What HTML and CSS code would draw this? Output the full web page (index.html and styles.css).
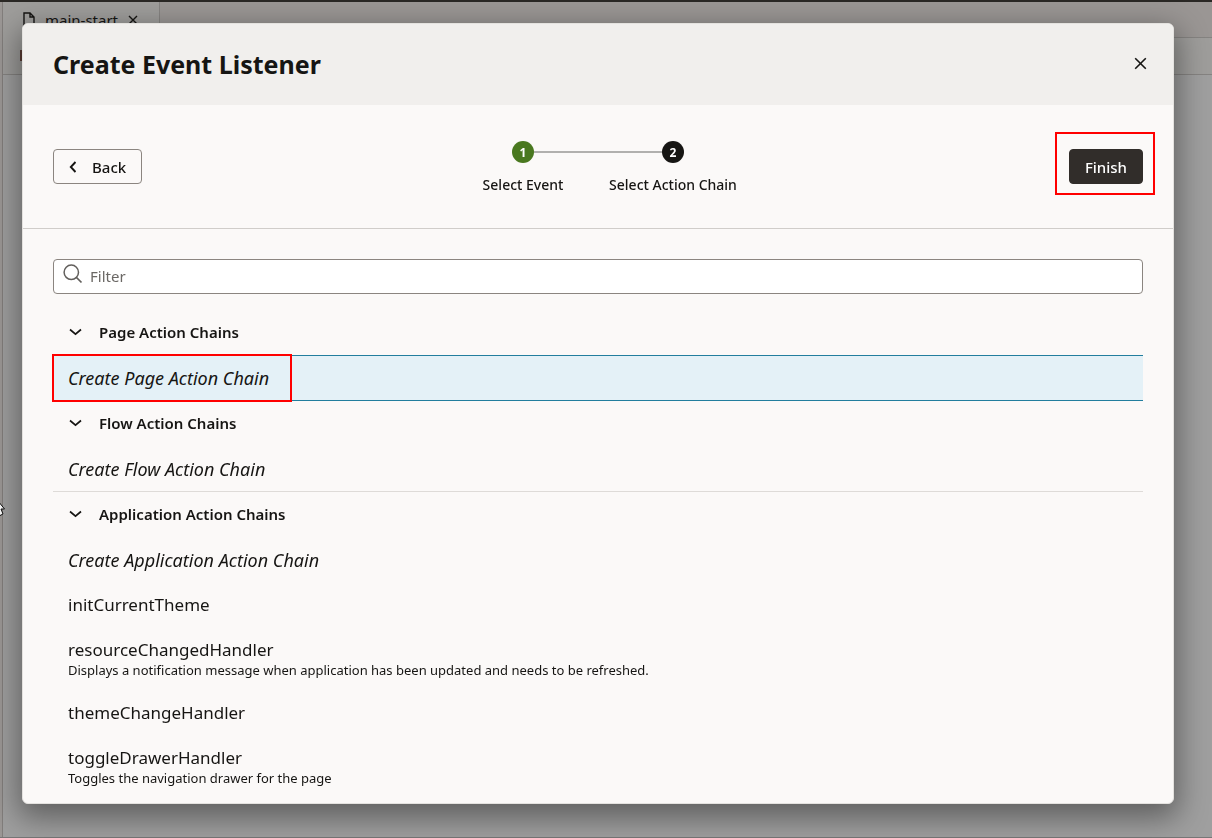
FILE: index.html
```html
<!DOCTYPE html>
<html lang="en">
<head>
<meta charset="utf-8">
<title>Create Event Listener</title>
<link rel="stylesheet" href="styles.css">
</head>
<body>
<div class="workspace" aria-hidden="true">
  <div class="tabbar">
    <div class="tab">
      <svg class="file-icon" width="12" height="16" viewBox="0 0 12 16"><path d="M1 1h6l4 4v10H1zM7 1v4h4" fill="none" stroke="currentColor" stroke-width="1.4"/></svg>
      <span>main-start</span>
      <svg width="10" height="10" viewBox="0 0 10 10"><path d="M1 1l8 8M9 1L1 9" stroke="currentColor" stroke-width="1.4"/></svg>
    </div>
  </div>
  <div class="subbar"><span class="subbar-mark"></span></div>
  <div class="canvas"></div>
</div>
<svg class="pointer" width="6" height="16" viewBox="0 0 6 16"><path d="M-6 -5L4.500 8H1L3 13L0 14.500L-3 9z" fill="#fff" stroke="#111" stroke-width="1"/></svg>

<div class="overlay">
  <div class="dialog" role="dialog" aria-modal="true" aria-labelledby="dialog-title">
    <header class="dialog-header">
      <h1 id="dialog-title">Create Event Listener</h1>
      <button class="close" type="button" aria-label="Close"><svg width="13" height="13" viewBox="0 0 13 13"><path d="M1.200 1.200l10.600 10.600M11.800 1.200L1.200 11.800" stroke="currentColor" stroke-width="1.600"/></svg></button>
    </header>
    <div class="wizard">
      <div class="side"><button class="btn back" type="button"><svg width="8" height="12" viewBox="0 0 8 12"><path d="M6.500 1L1.800 6l4.700 5" fill="none" stroke="currentColor" stroke-width="1.900"/></svg>Back</button></div>
      <ol class="steps">
        <li class="step done"><span class="dot">1</span><span class="step-label">Select Event</span></li>
        <li class="step current" aria-current="step"><span class="dot">2</span><span class="step-label">Select Action Chain</span></li>
      </ol>
      <div class="side end"><div class="marked"><button class="btn finish" type="button">Finish</button></div></div>
    </div>
    <div class="body">
      <label class="filter">
        <svg width="20" height="20" viewBox="0 0 20 20"><circle cx="8.300" cy="8.300" r="7.200" fill="none" stroke="currentColor" stroke-width="1.500"/><path d="M13.500 13.500l5 5" stroke="currentColor" stroke-width="1.700"/></svg>
        <input type="text" placeholder="Filter" aria-label="Filter">
      </label>
      <section class="group">
        <h2><button class="toggle" type="button" aria-expanded="true"><svg width="13" height="8" viewBox="0 0 13 8"><path d="M1 1.500l5.500 4.700L12 1.500" fill="none" stroke="currentColor" stroke-width="1.700"/></svg>Page Action Chains</button></h2>
        <ul><li class="item create selected"><span class="name">Create Page Action Chain</span></li></ul>
      </section>
      <section class="group">
        <h2><button class="toggle" type="button" aria-expanded="true"><svg width="13" height="8" viewBox="0 0 13 8"><path d="M1 1.500l5.500 4.700L12 1.500" fill="none" stroke="currentColor" stroke-width="1.700"/></svg>Flow Action Chains</button></h2>
        <ul><li class="item create ruled"><span class="name">Create Flow Action Chain</span></li></ul>
      </section>
      <section class="group">
        <h2><button class="toggle" type="button" aria-expanded="true"><svg width="13" height="8" viewBox="0 0 13 8"><path d="M1 1.500l5.500 4.700L12 1.500" fill="none" stroke="currentColor" stroke-width="1.700"/></svg>Application Action Chains</button></h2>
        <ul>
          <li class="item create"><span class="name">Create Application Action Chain</span></li>
          <li class="item"><span class="name">initCurrentTheme</span></li>
          <li class="item"><span class="name">resourceChangedHandler</span><span class="desc">Displays a notification message when application has been updated and needs to be refreshed.</span></li>
          <li class="item"><span class="name">themeChangeHandler</span></li>
          <li class="item"><span class="name">toggleDrawerHandler</span><span class="desc">Toggles the navigation drawer for the page</span></li>
        </ul>
      </section>
    </div>
  </div>
</div>
</body>
</html>
```
FILE: styles.css
```css
*, *::before, *::after { box-sizing: border-box; }
body { margin: 0; font-family: "Noto Sans", "Open Sans", sans-serif; color: #161513; }
h1, h2, ul, ol { margin: 0; padding: 0; list-style: none; }
button, input { font: inherit; color: inherit; }
svg { display: block; flex: none; }

.workspace { position: fixed; inset: 0; display: flex; flex-direction: column; border-top: 2px solid #2a2825; border-bottom: 1px solid #777; background: #9f9f9f; }
.workspace::before { content: ""; position: absolute; inset: 0 auto 0 0; width: 3px; background: #9b9795; border-right: 1px solid #827e7c; }
.tabbar { height: 36px; padding-left: 3px; background: #9a9694; border-bottom: 1px solid #858381; }
.tab { display: flex; align-items: center; gap: 10px; width: 157px; height: 36px; padding-left: 20px; background: #9e9d9b; border-right: 1px solid #858381; font-size: 15px; }
.subbar { height: 37px; padding: 12px 0 0 20px; background: #9e9d9b; border-bottom: 1px solid #858381; }
.subbar-mark { display: block; width: 2px; height: 11px; background: #5c3d35; }
.pointer { position: fixed; left: 0; top: 501px; }

.overlay { position: absolute; inset: 0; padding: 23px 38px 34px 22px; }
.dialog { border: 1px solid #e4e2df; border-radius: 6px; overflow: hidden; background: #fbf9f8; box-shadow: 0 10px 30px 4px rgba(0, 0, 0, 0.4); }
.dialog-header { display: flex; align-items: center; justify-content: space-between; height: 81px; padding: 0 26px 2px 30px; background: #f1efed; }
h1 { font-size: 25px; font-weight: 700; line-height: 32px; }
.close { padding: 0; border: 0; background: none; }

.wizard { display: flex; align-items: flex-start; justify-content: space-between; height: 124px; padding: 27px 30px 0; border-bottom: 1px solid #d0cdca; }
.side { flex: 1; display: flex; padding-top: 17px; }
.side.end { justify-content: flex-end; padding-top: 0; }
.btn { display: flex; align-items: center; height: 35px; padding: 0 15px; border: 1px solid #8b8580; border-radius: 4px; background: none; font-size: 15px; font-weight: 500; }
.back { gap: 15px; }
.finish { background: #312d2a; border-color: #312d2a; color: #fff; }
.marked { margin-right: -12px; padding: 15px 10px 9px 12px; border: 2px solid #f00; }
.steps { display: flex; padding-top: 9px; }
.step { position: relative; display: flex; flex-direction: column; align-items: center; gap: 11px; width: 150px; }
.step + .step::before { content: ""; position: absolute; top: 10px; left: -64px; width: 128px; height: 2px; background: #b1b0ae; }
.dot { display: grid; place-items: center; width: 22px; height: 22px; border-radius: 50%; background: #161513; color: #fff; font-size: 12px; font-weight: 700; }
.done .dot { background: #49781f; }
.step-label { font-size: 14px; font-weight: 500; line-height: 22px; white-space: nowrap; }

.body { padding: 30px 30px 4px; }
.filter { display: flex; gap: 7px; height: 35px; margin-bottom: 16px; padding: 4px 9px 0; border: 1px solid #8b8580; border-radius: 4px; background: #fff; color: #625f5c; }
.filter input { flex: 1; min-width: 0; height: 24px; padding: 0; border: 0; outline: 0; background: none; font-size: 15px; }
.filter input::placeholder { color: #6b6865; opacity: 1; }
.toggle { display: flex; align-items: center; gap: 17px; width: 100%; height: 45px; padding: 0 16px 2px; border: 0; background: none; font-size: 15px; font-weight: 600; }
.item { position: relative; display: flex; flex-direction: column; padding: 10px 15px; border-bottom: 1px solid transparent; }
.create { padding-top: 11px; }
.name { font-size: 17px; line-height: 24px; }
.create .name { font-size: 18px; font-style: italic; }
.desc { margin-bottom: 2px; font-size: 13px; line-height: 16px; }
.ruled { border-color: #dedbd8; }
.selected { padding-top: 10px; background: #e4f1f7; border-top: 1px solid #227e9e; border-bottom-color: #227e9e; }
.selected::after { content: ""; position: absolute; inset: -2px auto -2px -1px; width: 240px; border: 2px solid #f00; }
```
